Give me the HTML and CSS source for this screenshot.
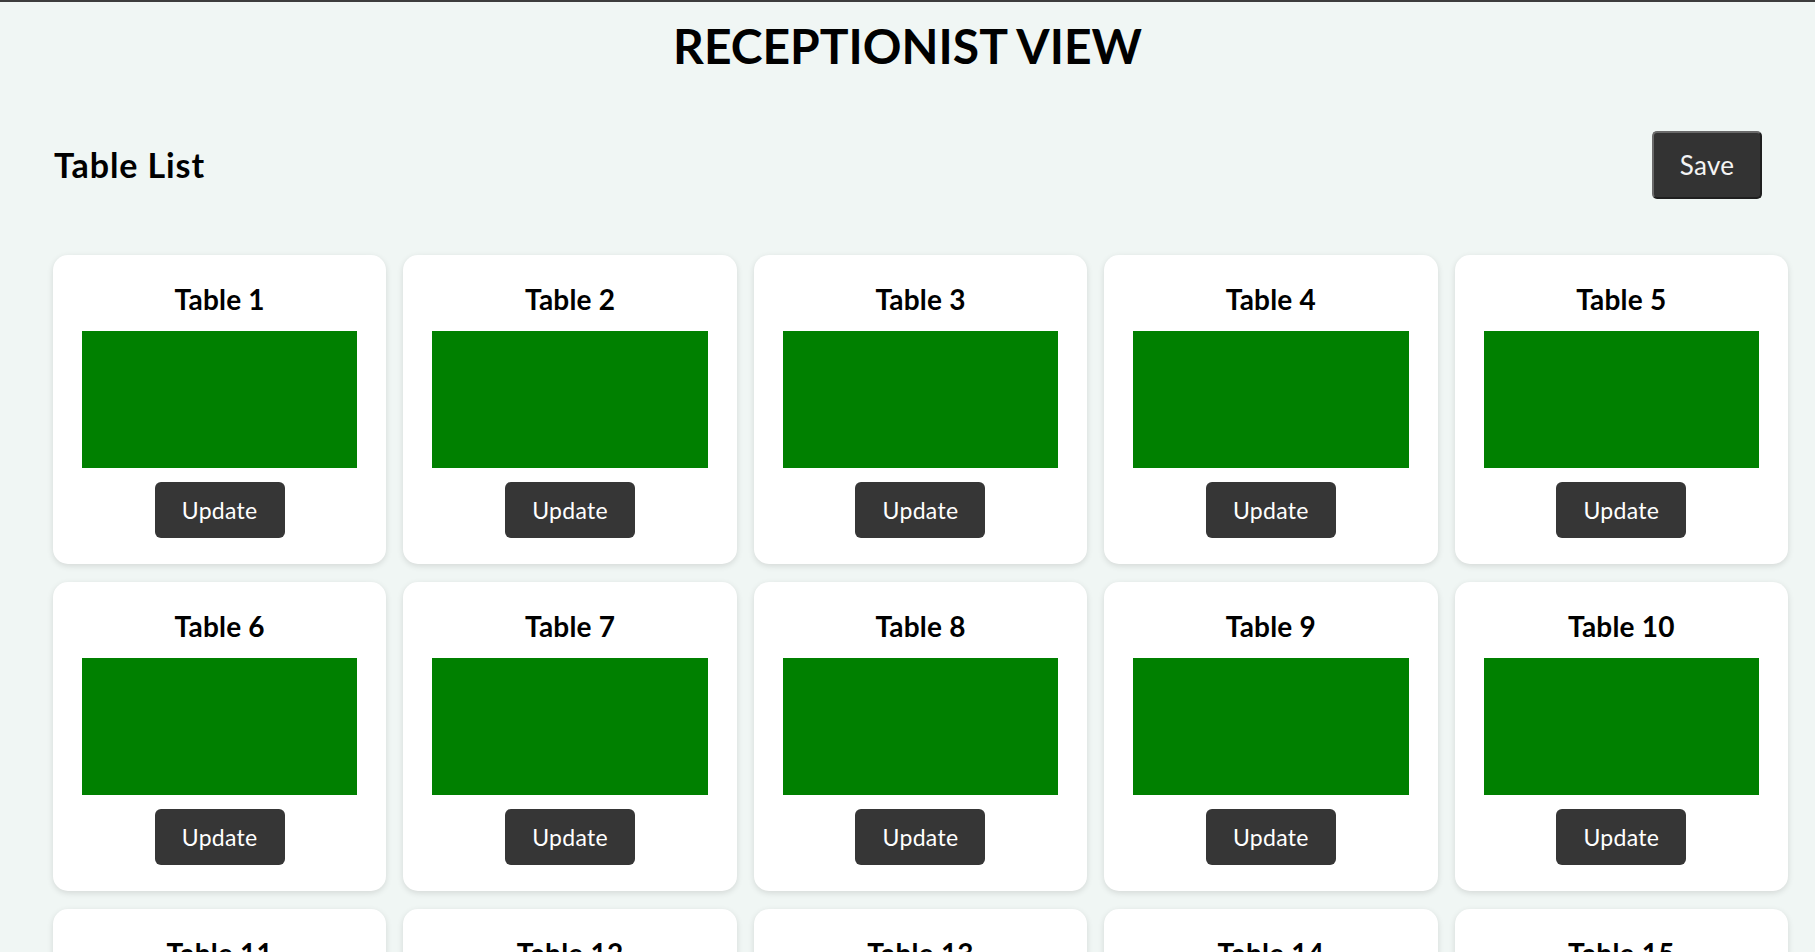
FILE: index.html
```html
<!DOCTYPE html>
<html lang="en">
<head>
<meta charset="utf-8">
<title>Receptionist View</title>
<link rel="stylesheet" href="styles.css">
</head>
<body>
<div class="topline"></div>
<h1 class="page-title">RECEPTIONIST VIEW</h1>
<div class="list-header">
  <h2 class="list-title">Table List</h2>
  <button class="save-btn">Save</button>
</div>
<div class="grid">
  <div class="card"><div class="card-title">Table 1</div><div class="status"></div><button class="update-btn">Update</button></div>
  <div class="card"><div class="card-title">Table 2</div><div class="status"></div><button class="update-btn">Update</button></div>
  <div class="card"><div class="card-title">Table 3</div><div class="status"></div><button class="update-btn">Update</button></div>
  <div class="card"><div class="card-title">Table 4</div><div class="status"></div><button class="update-btn">Update</button></div>
  <div class="card"><div class="card-title">Table 5</div><div class="status"></div><button class="update-btn">Update</button></div>
  <div class="card"><div class="card-title">Table 6</div><div class="status"></div><button class="update-btn">Update</button></div>
  <div class="card"><div class="card-title">Table 7</div><div class="status"></div><button class="update-btn">Update</button></div>
  <div class="card"><div class="card-title">Table 8</div><div class="status"></div><button class="update-btn">Update</button></div>
  <div class="card"><div class="card-title">Table 9</div><div class="status"></div><button class="update-btn">Update</button></div>
  <div class="card"><div class="card-title">Table 10</div><div class="status"></div><button class="update-btn">Update</button></div>
  <div class="card"><div class="card-title">Table 11</div><div class="status"></div><button class="update-btn">Update</button></div>
  <div class="card"><div class="card-title">Table 12</div><div class="status"></div><button class="update-btn">Update</button></div>
  <div class="card"><div class="card-title">Table 13</div><div class="status"></div><button class="update-btn">Update</button></div>
  <div class="card"><div class="card-title">Table 14</div><div class="status"></div><button class="update-btn">Update</button></div>
  <div class="card"><div class="card-title">Table 15</div><div class="status"></div><button class="update-btn">Update</button></div>
</div>
</body>
</html>
```
FILE: styles.css
```css
* { box-sizing: border-box; }
html, body {
  margin: 0;
  padding: 0;
}
body {
  background: #f0f6f4;
  font-family: Lato, "Noto Sans", sans-serif;
  color: #000;
}
.topline {
  height: 2px;
  background: #3d3d3d;
}
.page-title {
  margin: 15px 0 0;
  text-align: center;
  font-size: 48px;
  line-height: 58px;
  font-weight: 700;
  letter-spacing: 0;
}
.list-header {
  display: flex;
  align-items: center;
  justify-content: space-between;
  padding: 0 53px 0 54px;
  margin-top: 56px;
  height: 68px;
}
.list-title {
  margin: 0;
  font-size: 34px;
  font-weight: 700;
  line-height: 40px;
  letter-spacing: 0.9px;
}
.save-btn {
  width: 110px;
  height: 68px;
  background: #333;
  color: #f4f4f4;
  font-family: inherit;
  font-size: 26px;
  letter-spacing: 0.3px;
  border: 2px solid;
  border-color: #6a6a6a #1f1f1f #1f1f1f #6a6a6a;
  border-radius: 5px;
}
.grid {
  display: grid;
  grid-template-columns: repeat(5, 1fr);
  column-gap: 17px;
  row-gap: 18px;
  padding: 0 27px 0 53px;
  margin-top: 56px;
}
.card {
  background: #fff;
  border-radius: 15px;
  box-shadow: 0 2px 6px rgba(0, 0, 0, 0.12);
  padding: 27px 29px 26px;
  display: flex;
  flex-direction: column;
  align-items: center;
}
.card-title {
  font-size: 28px;
  line-height: 34px;
  font-weight: 700;
  letter-spacing: 0.2px;
}
.status {
  align-self: stretch;
  height: 137px;
  margin-top: 15px;
  background: #008000;
}
.update-btn {
  margin-top: 14px;
  width: 130px;
  height: 56px;
  background: #363636;
  color: #fff;
  border: none;
  border-radius: 6px;
  font-family: inherit;
  font-size: 23px;
  letter-spacing: 0.3px;
}
```
